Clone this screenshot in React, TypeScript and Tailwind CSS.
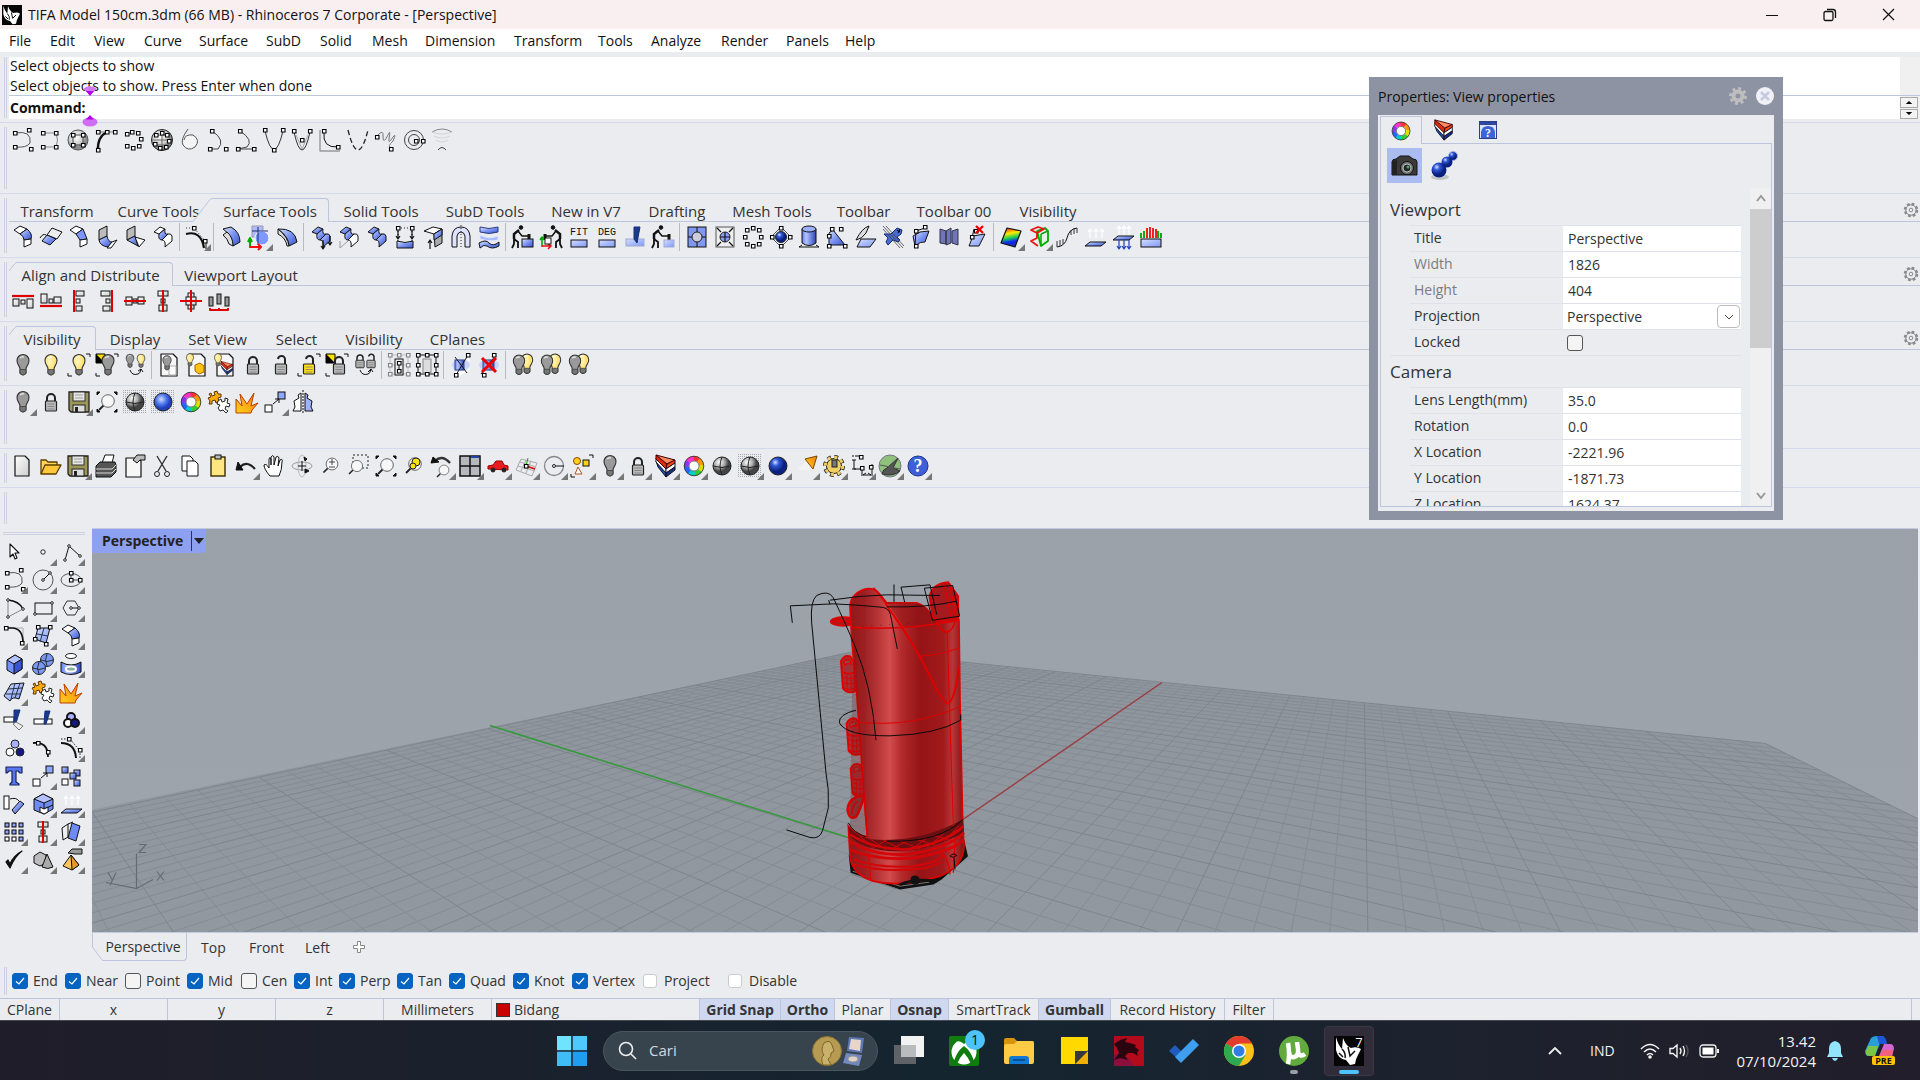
import React from "react";

type N = React.ReactNode;

/* ---------- drawing helpers: every icon is centred on 0,0 in a 28 x 28 cell ---------- */
const L = (d: string, stroke = "#111", fill = "none", w = 1) => (
  <path d={d} stroke={stroke} fill={fill} strokeWidth={w} strokeLinejoin="round" />
);
const Q = (...p: number[]) => {
  let d = "";
  for (let i = 0; i < p.length; i += 2) d += `M${p[i] - 1.5} ${p[i + 1] - 1.5}h3.5v3.5h-3.5z`;
  return <path d={d} fill="#fff" stroke="#000" strokeWidth="1.1" />;
};
const C = (x: number, y: number, r: number, fill = "none", stroke = "#222", w = 1) => (
  <circle cx={x} cy={y} r={r} fill={fill} stroke={stroke} strokeWidth={w} />
);
const R = (x: number, y: number, w: number, h: number, fill = "#fff", stroke = "#111", sw = 1) => (
  <rect x={x} y={y} width={w} height={h} fill={fill} stroke={stroke} strokeWidth={sw} />
);
const B = "url(#gB)";
const G = "url(#gG)";
const K = "#111";

const bulbPath = "M-3 4C-3 1-6 0-6-4.5A6 6 0 0 1 6-4.5C6 0 3 1 3 4V8Q0 12-3 8Z";
const Bulb = ({ f = "url(#gBulb)", x = 0, y = 0, s = 1 }: { f?: string; x?: number; y?: number; s?: number }) => (
  <g transform={`translate(${x} ${y}) scale(${s})`}>
    <path d={bulbPath} fill={f} stroke="#333" strokeWidth="1.1" />
    <path d="M-3 4.5H3V8.5Q0 11.5-3 8.5Z" fill="#777" stroke="#333" strokeWidth=".7" />
    <path d="M-3-7Q-1-9 1-8" stroke="#fff" strokeWidth="1.5" fill="none" opacity=".7" />
  </g>
);
const Lock = ({ f = "#bbb", open = false, x = 0, y = 0, s = 1 }: { f?: string; open?: boolean; x?: number; y?: number; s?: number }) => (
  <g transform={`translate(${x} ${y}) scale(${s})`}>
    <path d={open ? "M4 0V-5A3.5 3.5 0 0 0-3-6" : "M-4 0V-4A4 4 0 0 1 4-4V0"} fill="none" stroke="#222" strokeWidth="2" />
    <rect x="-5.5" y="-1" width="11" height="10" rx="1" fill={f} stroke="#222" strokeWidth="1.2" />
    <path d="M-3.5 2H3.5M-3.5 4.500H3.5M-3.500 7H3.5" stroke="#777" strokeWidth=".8" />
  </g>
);
const Brk = () => L("M7-11H11V-8M-11 8V11H-7");
const Ylw = () => (
  <>
    <path d="M-11-11H-2V-2H-11Z" fill="#ffe100" stroke="#000" />
    <path d="M-11-2V-11L-2-2Z" fill="#000" />
  </>
);
const Page = () => L("M-8-11H4L8-7V11H-8Z", K, "#f6f6f6", 1.2);
const Wheel = ({ s = 1 }: { s?: number }) => (
  <g transform={`scale(${s})`} fill="none" strokeWidth="4.5">
    {["#f33", "#f90", "#dd0", "#3c3", "#0cc", "#26f", "#83f", "#f3c"].map((c, i) => {
      const a = (i * Math.PI) / 4 - 1.7;
      const b = a + 0.83;
      return <path key={c} stroke={c} d={`M${7.5 * Math.cos(a)} ${7.5 * Math.sin(a)}A7.5 7.5 0 0 1 ${7.5 * Math.cos(b)} ${7.5 * Math.sin(b)}`} />;
    })}
    <circle r="9.8" stroke="#222" strokeWidth=".8" />
    <circle r="5" stroke="#444" strokeWidth=".7" fill="#fff" />
  </g>
);
const Mag = ({ x = 1, y = -2, s = 1, f = "#f7f7f7" }: { x?: number; y?: number; s?: number; f?: string }) => (
  <g transform={`translate(${x} ${y}) scale(${s})`}>
    <path d="M-5 5L-10 10" stroke="#222" strokeWidth="2" />
    <circle r="7" fill={f} stroke="#555" />
  </g>
);
const Floppy = () => (
  <>
    <path d="M-10-10H10V10H-8L-10 8Z" fill="#9c9657" stroke="#222" strokeWidth="1.3" />
    <rect x="-6" y="-10" width="12" height="9" fill="#e6e8e6" stroke="#333" />
    <path d="M-4-7H4M-4-4H4" stroke="#999" />
    <rect x="-6" y="3" width="12" height="7" fill="#ddd" stroke="#222" />
    <rect x="-4" y="5" width="3" height="5" fill="#222" />
  </>
);
const Globe = () => (
  <>
    {C(0, 0, 9, "url(#gGS)")}
    {L("M-9 0Q0 3 9 0M0-9Q-4 0 0 9", "#222")}
  </>
);
const Dots = () => <rect x="-12" y="-12" width="24" height="24" fill="url(#dots)" />;
const Layers = () => (
  <>
    {L("M-10-5L0 7V11L-8 1Z", "#112", "#1d4fb0")}
    {L("M-10-8L0 2V7L-10-4Z", "#112", "#fff")}
    {L("M-10-11L1-2 0 3-10-7Z", "#400", "#e02a12")}
    {L("M-10-11L9-6 1-2Z", "#400", "#ff8a5c")}
    {L("M1-2L9-6V-3L0 3Z", "#400", "#f2441c")}
    {L("M0 3L9-3V1L0 7Z", "#112", "#fff")}
    {L("M0 7L9 1V4L0 11Z", "#112", "#1b2f86")}
  </>
);
const Arr = (x: number, y: number, up = true, c = "#111") =>
  L(up ? `M${x} ${y + 9}V${y}M${x - 2} ${y + 3}L${x} ${y}L${x + 2} ${y + 3}` : `M${x} ${y - 9}V${y}M${x - 2} ${y - 3}L${x} ${y}L${x + 2} ${y - 3}`, c, "none", 1.2);
const Worker = ({ flip = false }: { flip?: boolean }) => (
  <g transform={flip ? "scale(-1 1)" : ""} fill="none" stroke="#111">
    <circle cx="-2" cy="-9.5" r="1.8" fill="#111" />
    <path d="M-4-7L-9-3V2" strokeWidth="2.5" />
    <path d="M-9 2L-5 5V11M-9 2V7L-11 11" strokeWidth="1.8" />
    <path d="M-5-6L-1-1 5-1" strokeWidth="1.500" />
    <path d="M6 3V-3" strokeWidth="3" />
  </g>
);
const Puzzle = () => (
  <>
    {L("M-10-8L-8-9-7-6-4-7-5-10-2-11-1-8 2-8 2-5-1-4 0-1-3 1-4-2-7-1-7 2-10 2-9-1-11-4-8-5Z", "#5a3500", "#ffab0f")}
    {L("M-1-1L2-3 3 0 6-1 6-4 9-3 8 1 11 2 10 5 7 4 6 7 9 9 7 11 4 8 1 9-1 6 1 3-2 2Z", "#222", "#fff")}
  </>
);
const Boom = () => L("M-11 11V-3L-5 4-7-8 0 2 7-9 4 4 11 1 5 8 4 11Z", "#c03c00", "url(#gO)");
const Move = () => (
  <>
    {R(-10, 3, 7, 7)}
    {R(3, -10, 7, 7, "#8ea6ff")}
    {L("M-2 2L4-3M0-3H4V1")}
  </>
);
/* stair-shaped surface: top tread, shaded riser, bottom tread */
const Step = ({ top = B, mid = B, low = B }: { top?: string; mid?: string; low?: string }) => (
  <>
    {L("M-9-5L-3-10 2-8-4-3Z", K, top)}
    {L("M-4-3L2-8Q1-2 5-3L-1 3Q-5 3-4-3Z", K, mid)}
    {L("M-1 3L5-3Q8-4 9-1V4L2 10Q3 3-1 3Z", K, low)}
  </>
);

const icons: Record<string, N> = {
  curve4: <>{L("M-7-7Q10-10 8 3M8 3Q5 8-7 7", "#555")}{Q(-7, -7, 7, -10, -7, 7, 9, 9)}</>,
  curve4b: <>{L("M-7-7H6Q9 0 6 7H-7", "#888")}{Q(-7, -7, 6, -7, -7, 7, 6, 7)}</>,
  curveSph: <>{C(0, 0, 10, "url(#gGL)", "#555")}{L("M-5-5H5V5H-5Z", "#444")}{Q(-5, -5, 5, -5, 5, 5, -5, 5)}</>,
  handle: <>{L("M-8 11Q-9-3 1-8", K, "none", 2.4)}{L("M-8-8H10", "#777")}{Q(-8, -8, 1, -8, 9, -8, -8, 10)}</>,
  ringPts: <>{Q(-7, -6, -2, -8, 4, -7, 7, -1, 5, 6, -1, 8, -7, 6)}</>,
  ballPts: <>{C(0, 0, 10.5, "url(#gGL)")}{L("M-10 0H10M0-10V10M-8-5H8M-8 5H8", "#666")}{Q(-6, -5, 0, -7, 5, -5, 7, 1, 4, 7, -2, 8, -7, 4)}</>,
  blob: <>{L("M-2-11Q-10 0-7 5Q-2 12 5 7Q11 0 3-5Q-5-6-6 0", "#555", "#f4f4f4")}</>,
  s1: <>{L("M-6-9Q8 0 0 9H-8", "#444")}{Q(-6, -9, -8, 9, 8, 9)}</>,
  s2: <>{L("M-6-9Q8 0 1 7L-8 9H8", "#444")}{Q(-6, -9, -8, 9, 8, 9)}</>,
  v1: <>{L("M-9-9Q0 28 9-9", "#333")}{Q(-9, -10, 9, -10, 0, 10)}</>,
  v2: <>{L("M-8-8Q-4 10 0 10 4 10 8-8", "#333")}{L("M-6-5L0 9M6-5L0 9", "#aaa")}{Q(-8, -9, 8, -9, 0, 0)}</>,
  lcurve: <>{L("M-10-10V11H10", "#999", "none", 1.4)}{L("M-6-8Q-8 8 8 7", K)}{Q(-6, -9, 8, 7)}</>,
  vdash: <path d="M-10-10Q0 30 10-10" fill="none" stroke="#222" strokeWidth="1.3" strokeDasharray="5 3" />,
  coil: <>{L("M-9-4Q-2-12-3-3Q-3 5 2-5Q5-12 3-1Q2 5 7-3Q11-8 7 1Q1 6 5 9", "#777")}{Q(-9, -3, 5, 9)}</>,
  spiral: <>{C(0, 0, 9.5, "none", "#444")}{C(0, 0, 5.5, "none", "#444")}{Q(2, 1, 9, 1)}</>,
  tornado: <>{L("M-10-8Q0-14 10-8", "#888")}{L("M-10-8Q0-4 10-8M-8-4Q0 0 8-4M-6 0Q0 4 6 0", "#d4d4d8")}{L("M-4 10Q0 5 4 10", "#444")}</>,

  sBlend: <>{L("M-9-7L-3-11 4-8-3-3Z", K, "#fff")}{L("M-3-3L4-8Q10-3 8 2L1 3Q1-1-3-3Z", K, B)}{L("M1 3L8 2V7L1 10Z", K, "#fff")}</>,
  sTilt: <>{L("M-4-2L1-9 11-5 6 2Z", K, "#eee")}{L("M-9 4L-4-2 5 2-1 8Z", K, B)}{L("M-11 1Q-8-4-5-2", K)}</>,
  sChamfer: <>{L("M-9-7L-3-11 4-8-3-3Z", K, "#fff")}{L("M-3-3L4-8 8 2 1 3Z", K, "#7d97ff")}{L("M1 3L8 2V7L1 10Z", K, "#fff")}</>,
  sFold: <>{L("M-8-7L0-11V-1L-8 3Z", K, "#bbb")}{L("M-8 3L0-1Q1 5 5 5L1 10Q-7 9-8 3Z", K, B)}{L("M5 5L10 3 4 11H0Z", K, "#fff")}</>,
  sFold2: <>{L("M-8-7L0-11V-1L-8 3Z", K, "#bbb")}{L("M-8 3L0-1 3 9Z", K, B)}{L("M0 0L10 3 4 10Z", K, "#fff")}</>,
  sStep: <Step top="#fff" low="#fff" />,
  fillet: <>{L("M9 5V12", K)}<path d="M-11-9H-3L9 5" stroke="#333" strokeDasharray="1 2" fill="none" />{L("M-11-3Q4-7 7 11", K, "none", 2.2)}{Q(-3, -9, 8, 4)}</>,
  arcS: <>{L("M-8-8L0-10Q9-5 9 5L2 9Q1-2-8-8Z", K, B)}{L("M-8-2L-4-5Q2 0 2 9L-2 7Q-3 2-8-2Z", K, "#ddd")}</>,
  grow: <>{L("M-7-11H4V0H-7Z", "#99a", "#aebcff")}{C(3, 1, 7, "#7f98ff", "#fff")}{L("M-7-6H9M-1-10V8", "#1c2c70")}{L("M-9 11V2M-11 5L-9 1L-7 5", "#0a0", "none", 2)}{L("M-9 10H2M-1 7L2 10L-1 13", "#e11", "none", 2)}</>,
  fan: <>{L("M-9-8Q8-9 10 5L2 9Q2 0-9-8Z", K, B)}{L("M-9-3Q-1 1 0 9L2 9Q1 0-9-8Z", K, "#ddd")}</>,
  stepDn: <><Step />{Arr(2, 12, false)}{Arr(9, 8, false)}</>,
  stepR: <><Step low="#fff" />{L("M-9 4V11L-1 4", "#999")}</>,
  step: <Step />,
  box4: <><path d="M-7-9H7M-7-9V6M7-9V6" stroke="#222" strokeDasharray="1 2" />{L("M-8 4Q0 7 8 4V11H-8Z", K, B)}{Q(-7, -9, 7, -9)}{Arr(-7, 2, false)}{Arr(7, 2, false)}</>,
  exBox: <>{L("M-9-6L0-10 9-8 1-3Z", K, "#fff")}{L("M1-3L9-8V6L2 10Z", K, "#aaa")}{L("M1-3L9-8V-2L1 3Z", K, B)}{Arr(-3, 3)}</>,
  arch: <>{L("M-9 10V-1Q-8-10 0-10 8-10 9-1V10H4V-1Q3-5 0-5-3-5-4-1V10Z", K, "#dce2ff")}<path d="M0-12V12" stroke="#222" strokeDasharray="1 2" /></>,
  waves: <>{L("M-9-10Q0-7 9-10V-5Q0-2-9-5Z", "#2b3b7c", B)}{L("M-9-2Q0 3 9-1V3Q2 5-9 2Z", "#dfe5ff", "#a9baff")}{L("M-10 6Q-3 2 0 6Q4 10 10 5V9Q3 13-2 9Q-5 7-9 11Z", K, B)}</>,
  w1: <><Worker />{R(-1, 2, 11, 8, B)}</>,
  w2: <><Worker flip />{L("M-9 10V0M-11 3L-9 0L-7 3", "#0a0", "none", 1.6)}{L("M-9 9H0M-3 7L0 9L-3 12", "#e11", "none", 1.6)}{R(-6, 1, 6, 6)}</>,
  fit: <><text x="0" y="-2" textAnchor="middle" className="font-['Liberation_Mono'] text-[10px]" fill="#111">FIT</text>{R(-8, 3, 16, 7, "url(#gBL)")}</>,
  deg: <><text x="0" y="-2" textAnchor="middle" className="font-['Liberation_Mono'] text-[10px]" fill="#111">DEG</text>{R(-8, 3, 16, 7, "url(#gBL)")}</>,
  knife: <>{R(-9, 2, 18, 7, "url(#gBL)", "#a0aad0")}{L("M-1-10H5L2 6-1 2Z", "#12307a", "#1c3a8c")}</>,
  w3: <><Worker />{R(1, 3, 10, 7, "url(#gBL)", "#a0aad0")}</>,
  grid1: <>{R(-9, -10, 18, 20, "#8198f0")}{L("M-9 0H9M0-10V10", K)}{C(0, 0, 5, "#ccd")}</>,
  grid2: <>{R(-9, -10, 18, 20, "#eee", "#555")}{C(0, 0, 5, "#8b9ff0")}{L("M-8-9L-4-5M8-9L4-5M-8 9L-4 5M8 9L4 5M-5 0H5M0-5V5", K, "none", 1.2)}</>,
  pts8: <>{Q(0, -9, 6, -7, 8, 0, 6, 7, 0, 9, -6, 7, -8, 0, -6, -7)}</>,
  diam: <>{L("M0-10L10 0 0 10-10 0Z", "#555")}{C(0, 0, 5.5, "url(#gBS)")}{Q(0, -9, 9, 0, 0, 9, -9, 0)}</>,
  cyl: <>{L("M-7-8V6Q0 11 7 6V-8", K, "url(#gBC)")}<ellipse cx="0" cy="-8" rx="7" ry="3" fill="#9db0ff" stroke="#111" />{L("M-10 10H10M-10 10L-7 8M10 10L7 8")}</>,
  tri: <>{L("M-8 8V-4L-4-7 8 8Z", K, B)}{Q(-8, -1, -5, -8, 4, -8, -8, 9, 8, 9)}</>,
  pen: <>{L("M-4 2H11L5 10H-8Z", K, "url(#gBL)")}{L("M-9 3Q-3-9 4-11L1-4Q-3 2-9 3Z", K, "#ddd")}</>,
  cat: <>{L("M-2-3L4-9 9-7 8-3 4 0 7 3 5 5 0 3-5 8-7 5-5 1-9-3Z", "#132d7b", "#4a6ad0")}{L("M-10-11L10 11M-10-8L7 11M-7-11L11 9", "#444", "none", 0.8)}{L("M4-7L7-5M7-8L5-4", "#000")}</>,
  surfPts: <>{L("M-8-1L-1-5 8-6 4 5Q0 4-6 9Z", K, B)}{L("M-6 8L-5-6 4-9", K)}{Q(-5, -6, 4, -10, -5, 9)}</>,
  book: <>{L("M-9-8L-3-6V7L-9 6ZM-3-6L2-9V6L-3 8ZM3-6L9-8V8L3 6Z", "#334", "#6f75b5")}</>,
  surfX: <>{L("M-8 9L-4-1 8-3 2 9Z", K, "url(#gBL)")}{L("M-5 1L-3-8", K)}{Q(-5, 0, -1, -6)}{L("M-1-11L6-4M6-11L-1-4", "#e00", "none", 2.2)}</>,
  rainbow: L("M-10 6L-4-9 10-6 4 10Z", K, "url(#gR)", 1.2),
  zebra: <>{L("M-2-6L6-9 9-6V4L2 9Z", "#0a0", "#e4f5e4", 1.8)}{L("M2-3L9-6M2-3V9", "#0a0", "none", 1.5)}{L("M-8-7L-1-10 5-8-2-4ZM-2-4V1L-8 4-1 9", "#e11", "none", 1.8)}</>,
  curv: <>{L("M-10 10Q-2 9 0 1 2-8 10-9", K)}{L("M-10 10V4M-7 9V3M-4 7V2M10-9V-4M7-9V-3M4-7V-2", "#333")}</>,
  arrowsUp: <>{L("M-10 9L-5 5H11L6 9Z", K, B)}{Arr(-5, -8, true, "#fff")}{Arr(1, -8, true, "#fff")}{Arr(7, -8, true, "#fff")}</>,
  arrowsUD: <>{L("M-10 3L-5-1H11L6 3Z", K, B)}{Arr(-4, -11, true, "#fff")}{Arr(1, -11, true, "#fff")}{Arr(6, -11, true, "#fff")}{Arr(-4, 12, false, "#2440c0")}{Arr(1, 12, false, "#2440c0")}{Arr(6, 12, false, "#2440c0")}</>,
  bars: <>{R(-10, 2, 20, 8, "url(#gBL)")}<path d="M-10 1V-4M-7 1V-6M7 1V-6M10 1V-4" stroke="#1a1" strokeWidth="2" /><path d="M-4 1V-9M-1 1V-10M2 1V-9M5 1V-8" stroke="#e22" strokeWidth="2" /></>,

  alTop: <>{L("M-11-5H11", "#d00", "none", 2.2)}{R(-10, -2, 6, 7, G)}{R(-2, -1, 4, 4, G)}{R(4, -2, 6, 9, G)}</>,
  alBot: <>{L("M-11 5H11", "#d00", "none", 2.2)}{R(-10, -7, 6, 9, G)}{R(-2, -2, 4, 4, G)}{R(3, -4, 7, 6, G)}</>,
  alL: <>{L("M-5-11V11", "#d00", "none", 2)}{R(-3, -10, 8, 5, G)}{R(-3, -2, 4, 4, G)}{R(-3, 5, 6, 5, G)}</>,
  alR: <>{L("M5-11V11", "#d00", "none", 2)}{R(-6, -10, 9, 5, G)}{R(-1, -2, 4, 4, G)}{R(-4, 5, 7, 5, G)}</>,
  alH: <>{R(-9, -4, 6, 8, G)}{R(-2, -2, 4, 4, G)}{R(3, -4, 6, 7, G)}{L("M-11 0H11", "#d00", "none", 2)}</>,
  alV: <>{R(-5, -10, 10, 5, G)}{R(-2, -2, 4, 4, G)}{R(-4, 4, 8, 6, G)}{L("M0-11V11", "#d00", "none", 2)}</>,
  alC: <>{R(-3, -8, 6, 16, G)}{R(-5, -4, 10, 8, G)}{L("M0-11V11M-11 0H11", "#d00", "none", 2)}</>,
  dist: <>{R(-10, -4, 4, 9, "#999")}{R(-2, -7, 4, 10, "#999")}{R(6, -4, 4, 9, "#999")}{L("M-9 7V9H9V7M0 7V9", "#d00", "none", 2)}</>,

  bulbG: <Bulb f="#9a9a9a" />,
  bulbY: <Bulb />,
  bulbSel: <><Bulb />{Brk()}</>,
  bulbInv: <>{Ylw()}<Bulb f="#9a9a9a" x={1} />{Brk()}</>,
  bulbSwap: <><Bulb f="#9a9a9a" x={-5} y={-4} s={0.65} /><Bulb x={6} y={-4} s={0.65} />{L("M-5 5Q-3 11 3 9M6 4Q5 9 3 9M3 6L6 4L8 7")}</>,
  pgBulb: <>{Page()}{R(0, 1, 7, 9, "#fff", "#aaa")}<Bulb f="#9a9a9a" x={-2} y={-2} s={0.7} /></>,
  pgBox: <>{Page()}<Bulb x={-7} y={-5} s={0.6} />{L("M-2 0L3-2 7 1V7L2 9-2 6Z", "#a60", "#ffc20e")}</>,
  pgLay: <>{Page()}<Bulb x={-7} y={-5} s={0.6} /><g transform="translate(2 3) scale(.6)"><Layers /></g></>,
  lock: <Lock />,
  lockO: <Lock open />,
  lockY: <><Lock f="#ffe21a" open />{Brk()}</>,
  lockInv: <>{Ylw()}<Lock x={2} />{Brk()}</>,
  lockSwap: <><Lock x={-5} y={-4} s={0.75} /><Lock open x={6} y={-4} s={0.75} />{L("M-5 5Q-3 11 3 9M6 4Q5 9 3 9M3 7L6 4L8 7")}</>,
  ptsG: (
    <>
      <g opacity=".45">{L("M-9-10H9V9H-9ZM-9 0H9M0-10V9", "#888")}{Q(-9, -10, 0, -10, 9, -10, 9, 0, 9, 9, -9, 9, -9, 0)}</g>
      {R(-4, -6, 8, 16, "#eee")}{L("M0-1V5")}{Q(0, -2, 0, 6)}
    </>
  ),
  ptsK: <>{L("M-9-10H9V9H-9Z")}{R(-4, -6, 8, 14, "#ddd", "#888")}{Q(-9, -10, 0, -10, 9, -10, 9, 0, 9, 9, -9, 9, -9, 0, 0, 9)}</>,
  clip: <>{L("M-5 7L8-10V5L-5 12Z", "#fff", "#fff")}<ellipse rx="9" ry="6" fill="#c8d4f8" />{R(-6, -5, 9, 10, "url(#gBC)", "#348")}{L("M-6-8L6 8M-5 10L7-10")}{Q(7, -10, -5, 10)}</>,
  clipX: <><ellipse rx="10" ry="6" fill="#c8d4f8" />{R(-6, -5, 11, 10, "url(#gBC)", "#348")}{L("M-8 9L7-10")}{Q(5, -10, -5, 10)}{L("M-7-7L7 7M7-7L-7 7", "#e00", "none", 3)}</>,
  bulbDbl: <><Bulb x={4} y={-1} s={0.95} /><Bulb f="#9a9a9a" x={-4} s={0.95} /></>,
  floppy: <Floppy />,
  zExt: <><Mag x={1} y={-1} s={0.9} />{L("M-10-7V-10H-7ZM7-10H10V-7ZM10 7V10H7ZM-7 10H-10V7Z", K, K)}</>,
  globeSel: <><Dots /><Globe /></>,
  blueSel: <><Dots />{C(0, 0, 9, "url(#gBS2)")}</>,
  wheel: <Wheel />,
  puzzle: <Puzzle />,
  boom: <Boom />,
  move: <Move />,
  mirror: <>{L("M-2-9L-5-7-4-4-9-1-8 5-10 9H-2Z", K, "#fff")}{L("M2-9L5-7 4-4 9-1 8 5 10 9H2Z", K, "#9fb2ff")}<path d="M0-12V12" stroke="#111" strokeDasharray="2 1" /></>,

  newDoc: L("M-7-10H3L7-6V10H-7Z", K, "url(#gG)", 1.2),
  open: <>{L("M-9 8V-6H-4L-2-4H7V-1", "#5c3f00", "#ffd25a", 1.3)}{L("M-9 8L-5-1H11L6 8Z", "#5c3f00", "#ffc83c", 1.3)}</>,
  print: <>{L("M-4-3L-1-11H8L6-3Z", K, "#fff")}{L("M-10 0L-6-4H9L10-1V6L5 11H-10Z", K, "#555")}{L("M-10 3H6L10-1M-10 7H6L10 3", "#ddd")}</>,
  docProp: <>{L("M-8-8H4L7-5V11H-8Z", K, "#f6f6f6", 1.2)}{L("M-1-6L3-11 11-11V-6H6L3-3Z", K, "#bbb")}</>,
  cut: <>{L("M-5-10L4 5M5-10L-4 5", "#333", "none", 1.4)}{C(-5, 8, 2.5)}{C(5, 8, 2.5)}</>,
  copy: <>{L("M-8-10H0L3-7V5H-8Z", K, "#fff")}{L("M-3-5H5L8-2V10H-3Z", K, "#fff")}</>,
  paste: <>{R(-7, -9, 14, 19, "#ffe680", "#3a2b00", 1.4)}{R(-3, -11, 6, 4, "#bbb")}</>,
  undo: <>{L("M-6 1Q1-6 9 3", "#222", "none", 2.2)}{L("M-10 4L-8-4-3 4Z", K, K)}</>,
  hand: L("M-4 10Q-10 3-10-1-8-3-5 2V-7Q-4-10-3-7V-1-9Q-1-12 0-9V-1L2-9Q4-11 5-8L4 0 6-6Q9-8 8-4 8 4 5 10Z", K, "#fff"),
  rotV: <><ellipse rx="10" ry="4" fill="none" stroke="#999" /><ellipse rx="4" ry="11" fill="none" stroke="#bbb" />{L("M0-5V5M-4 0H4")}{L("M3 3L7 5 3 7ZM2-9L5-7 3-5Z", K, K)}</>,
  zDyn: <><Mag x={2} y={-2} s={0.85} />{L("M-1-4H5M2-7V-1M-1 1H5", "#444")}</>,
  zWin: <><rect x="-5" y="-11" width="15" height="13" fill="none" stroke="#222" strokeDasharray="2 2" /><Mag x={-1} y={0} s={0.8} /></>,
  zSel: <><Mag s={0.9} />{C(2, -4, 4, "#ffe21a")}{C(-1, 0, 3, "#ffe21a")}</>,
  undoV: <><Mag x={2} y={4} s={0.7} />{L("M-7-5Q0-12 8-3", "#333", "none", 2.4)}{L("M-11-3L-9-9-3-4Z", K, K)}</>,
  four: <>{R(-10, -10, 20, 20, "#b5b8bc", K, 1.5)}{L("M-10 0H10M0-10V10", K, "none", 1.5)}{L("M1-9H9", "#24a", "none", 2)}</>,
  car: <>{L("M-10 3V0L-5-1-2-5H4L6-1 10 0V4Z", "#900", "#e81c1c")}{C(-5, 4, 2, "#222")}{C(6, 4, 2, "#222")}</>,
  cplane: <>{L("M-10 4L-5-7 11-3 6 10ZM-8 0L9 5M-6-4L10 1M-5 5L0-6M0 7L5-5", "#aaa")}{L("M0 0L2-8", "#0a0")}{L("M0 0L9 3", "#d00", "none", 1.5)}{Q(0, 0)}</>,
  circ: <>{C(0, 0, 9.5, "none", "#888", 1.3)}{C(0, 0, 1.5)}{L("M2 0H10", K)}</>,
  selObj: <>{C(-5, -5, 3.5, "#ffd21a", "#840")}{R(1, -6, 6, 6, "#ffd21a")}{L("M-4 1L0 8H-7Z", "#a52", "#fff")}{Brk()}</>,
  layers: <Layers />,
  globe: <Globe />,
  blue: C(0, 0, 9, "url(#gBS)"),
  spot: <>{L("M-8 3L8-11 3 4Z", "#f3f3f3", "#f3f3f3")}{L("M-1-7L11-10 7 3Z", "#7a4500", "url(#gO)")}</>,
  gear: (
    <>
      <circle r="7.5" fill="#f2cf63" stroke="#222" />
      <circle r="9" fill="none" stroke="#222" strokeWidth="4" strokeDasharray="3.8 3.27" />
      <circle r="8.7" fill="none" stroke="#f2cf63" strokeWidth="3" strokeDasharray="3.1 3.73" />
      {R(-2, -6, 5, 7, "#777", "#222")}
    </>
  ),
  dim: <>{L("M-7-10H0M-10-10H-8M-8-6V3M-10-6H-6M-10 3H-6M-8 3H0V10M10-2V10M1 9H9M1 9L4 7M9 9L6 7")}{Q(-1, -9, 0, 2, 9, 1)}</>,
  rhino: <>{C(0, 0, 11, "#8fc07c", "#778")}{L("M-8 8Q-7 3-3 2L8-8 3 2 10 5Q3 11-8 8Z", "#333", "#555")}{L("M-10-1L10 3", "#555")}</>,
  help: <>{C(0, 0, 10, "#3e5fd8", "#1d3390")}<text y="6" textAnchor="middle" fill="#fff" className="font-['Liberation_Serif'] text-[18px] font-bold">?</text></>,

  arrow: L("M-4-8V5L-1 2 1 7 3 6 1 1H5Z", K, "#fff", 1.1),
  point: C(0, 0, 2.2, "#fff"),
  poly: <>{L("M-6 8L-2-6 9 4")}{C(-6, 8, 1.3, "#fff")}{C(-2, -6, 1.3, "#fff")}{C(9, 4, 1.3, "#fff")}</>,
  circR: <>{C(0, 0, 10, "none", "#555")}{L("M0 0L7-7")}{C(0, 0, 1.3, "#fff")}{C(7, -7, 1.3, "#fff")}</>,
  ell: <><ellipse rx="10" ry="6.5" fill="none" stroke="#555" />{L("M0-6V0H9", "#444")}{Q(0, -7, 0, 0, 9, 0)}</>,
  arc: <>{L("M-6-8Q5-7 9 1", K, "none", 1.5)}{L("M-6-8V9L9 1", "#888")}{C(-6, -8, 1.3, "#fff")}{C(-6, 9, 1.3, "#fff")}{C(9, 1, 1.3, "#fff")}</>,
  rect: <>{R(-8, -5, 17, 11, "none")}{C(9, -5, 1.3, "#fff")}{C(-8, 6, 1.3, "#fff")}</>,
  hex: <>{L("M-4-7H4L8 0 4 7H-4L-8 0Z", "#333")}{L("M0 0H8")}{C(0, 0, 1.3, "#fff")}{C(8, 0, 1.3, "#fff")}</>,
  corner: <>{L("M-8-8H9V8", "#aaa")}{L("M-8-8H-1Q9-7 9 7", K, "none", 1.7)}{Q(-8, -8, 8, 7)}</>,
  surf4: <>{L("M-5-8H7L3 7-8 3Z", K, "url(#gBL)")}{L("M1-8L-3 6M-6-2L5 0", "#234")}{Q(-5, -9, 7, -9, -8, 3, 3, 8)}</>,
  box: <>{L("M-7-4L1-9 8-5V5L0 10-7 6Z", K, "#7490ff")}{L("M-7-4L1-9 8-5 0 0Z", K, "#b5c4ff")}{L("M0 0L8-5V5L0 10Z", K, "#3854d4")}</>,
  spheres: <>{C(4, -4, 6.5, "#7c96f5")}{L("M-2-4Q4-1 10-4M4-10Q1-4 4 2", "#233")}{C(-4, 4, 6.5, "#7c96f5")}{L("M-10 4Q-4 7 2 4M-4-2Q-7 4-4 10", "#233")}</>,
  pipeCut: <><ellipse cy="-8" rx="5.5" ry="2.5" fill="#fff" stroke="#222" />{L("M-10-2Q0 4 10-2V8Q0 13-10 8Z", K, "url(#gBC)")}<ellipse cx="0" cy="5" rx="5" ry="2.5" fill="#8aa" stroke="#fff" strokeWidth="2" /></>,
  mesh: <>{L("M-10 4L-3-8 10-9 5 7Q-2 4-4 9Z", K, "url(#gBL)")}{L("M-6-3L8-4M-8 2L6 2M1-9L-3 7M6-9L1 6", "#234")}</>,
  trim: <>{R(-10, -3, 10, 5)}{L("M0-10H6L2 3H0Z", "#12307a", "#1c3a8c")}{L("M2 2L9 6 5 10-1 4Z", "#777", "#eee")}</>,
  split: <>{R(-9, -1, 18, 5)}{L("M2-9H7L3 4H1Z", "#12307a", "#1c3a8c")}</>,
  group: <>{C(0, -3, 4, "#a9b0ff", K, 2)}{C(-3, 3, 4, "#fff", K, 2)}{C(4, 3, 4, "#13177e", K, 2)}</>,
  ungroup: <>{C(1, -4, 4, "#a9b0ff")}{C(-4, 4, 4, "#fff")}{C(6, 4, 4, "#13177e")}</>,
  edPts: <>{L("M-10-5Q5-7 5 9", K, "none", 1.8)}{Q(-5, -5, 5, 4)}</>,
  ctPts: <>{L("M-10-5Q4-5 5 10", K, "none", 2)}<path d="M-10-9H-1L9 3V10" fill="none" stroke="#222" strokeDasharray="1.5 1.5" />{Q(-2, -9, 9, 2)}</>,
  text: L("M-8-9H8V-3H6L4-5H2V6L5 8V9H-4V8L-2 6V-5H-5L-7-3H-8Z", "#16245c", "#5876f0", 1.2),
  arrCopy: <>{R(-9, -9, 6, 6, B)}{R(3, -6, 6, 6, B)}{R(-1, -3, 6, 6, B)}{R(-9, 3, 6, 6)}{R(3, 4, 6, 6, B)}</>,
  rot: <>{R(-10, -8, 5, 13)}{L("M-2 6L6-3 10 0 1 10Z", K, B)}{L("M-4-5Q2-7 5-3")}</>,
  cubeCorner: <>{L("M-9-5L0-10 10-5V5L1 10-9 6Z", K, "#6f8cf5")}{L("M-9-5L0-10 10-5 1-1Z", K, "#b3c2ff")}{L("M1-1V5M1 5L10 1", K)}{L("M-3 3L1 5 5 3V8L1 10-3 8Z", K, "#fff")}</>,
  grid9: <>{[-8, -1, 6].map((y) => [-8, -1, 6].map((x) => <rect key={`${x}${y}`} x={x - 1} y={y - 1} width="4" height="4" fill={y > 0 && x < 0 ? "#fff" : "#8da4ff"} stroke="#000" />))}</>,
  bend: <>{L("M-9-4L-3-8V5L-8 8Z", K, "#eee")}{L("M1-9L9-6 5 9-3 6Z", K, "#6d8af5")}{L("M-3-8L2-10")}</>,
  check: L("M-8 2L-4 8Q1-4 8-9-1-4-4 4L-6 0Z", K, K, 1.2),
  solids: <>{L("M-9-4L-3-8 3-5V3L-3 6-9 3Z", K, "#bbb")}{L("M4-6L10 7Q5 10-1 7Z", K, "#aaa")}</>,
  pyr: <>{L("M-8 6L0-5 8 5 1 10Z", K, "#ffc45a")}{L("M0-5L8 5 1 10Z", K, "#e39a2a")}{L("M-3-7L1-11H11V-6H4Z", K, "#999")}</>,
};

const Icon = ({ n }: { n: string }) => {
  const t = n.endsWith("+");
  const k = t ? n.slice(0, -1) : n;
  return (
    <button type="button" aria-label={k} className="block h-7 w-7 shrink-0">
      <svg viewBox="-14 -14 28 28" className="h-7 w-7 overflow-visible">
        {icons[k]}
        {t && <path d="M14 7V14H7Z" fill="#777" />}
      </svg>
    </button>
  );
};
const Icons = ({ list }: { list: string }) => (
  <div className="flex">
    {list.split(" ").map((n, i) =>
      n === "|" ? <span key={i} className="mx-[2px] h-7 w-[2px] border-l border-[#b8bac0]" /> : <Icon key={i} n={n} />
    )}
  </div>
);

const Grip = () => <div className="my-1 ml-1 w-[3px] shrink-0 border-x border-[#ccd2e4]" />;

const SmallGear = () => (
  <button type="button" aria-label="Tab options" className="mr-px h-4 w-4">
    <svg viewBox="-8 -8 16 16" className="h-4 w-4" fill="none" stroke="#888">
      <circle r="6" strokeWidth="2.5" strokeDasharray="2.7 2" />
      <circle r="5.2" />
      <circle r="1.8" />
    </svg>
  </button>
);

type Tab = { n: string; w: string };
const TabRow = ({ tabs, active, icons: list, slant }: { tabs: Tab[]; active: number; icons: string; slant: boolean }) => (
  <section className="flex h-16 border-b border-[#d5daea]">
    <Grip />
    <div className="ml-[2px] flex-1">
      <div className="mt-1 flex h-6 items-center border-b border-[#bcc5dc]">
        {tabs.map((t, i) => (
          <button
            key={i}
            type="button"
            className={`${t.w} relative z-10 h-6 shrink-0 pt-[2px] text-[15px] leading-5 whitespace-nowrap ${
              i === active ? "rounded-tr border-t border-r border-[#bcc5dc] bg-[#eaecf0]" : ""
            }`}
          >
            {i === active && slant && (
              <svg viewBox="0 0 20 24" className="absolute -top-px -left-[19px] h-6 w-5">
                <path d="M0 23.5L17 1.5Q18 .5 20 .5V24H0Z" fill="#eaecf0" />
                <path d="M0 23.5L17 1.5Q18 .5 20 .5" fill="none" stroke="#bcc5dc" />
              </svg>
            )}
            {i === active && !slant && (
              <svg viewBox="0 0 8 10" className="absolute -top-px left-0 h-[10px] w-2">
                <path d="M0 0H8L0 9Z" fill="#eaecf0" />
                <path d="M0 9L6 1.5Q7 .5 8 .5" fill="none" stroke="#bcc5dc" />
              </svg>
            )}
            {t.n}
          </button>
        ))}
        <span className="flex-1" />
        <SmallGear />
      </div>
      <div className="pt-[1px]">
        <Icons list={list} />
      </div>
    </div>
  </section>
);

/* ---------- perspective viewport ---------- */
const PU = 1.265;
const PV = 0.74;
const proj = (u: number, v: number) => {
  const w = 1 + PU * u + PV * v;
  return [(1723 * u - 60 * v + 909) / w, (689.4 * u + 412 * v + 857) / w];
};
const vMin = (u: number) => Math.max(-1, (-0.93 - PU * u) / PV);
const uMin = (v: number) => Math.max(-1, (-0.93 - PV * v) / PU);
const COUNT = 35;
const gridLines = () => {
  let minor = "";
  let major = "";
  for (let i = -COUNT; i <= COUNT; i++) {
    const k = i / COUNT;
    let s = "";
    const a = vMin(k);
    if (a < 1) {
      const p = proj(k, a);
      const q = proj(k, 1);
      s += `M${p[0].toFixed(1)} ${p[1].toFixed(1)}L${q[0].toFixed(1)} ${q[1].toFixed(1)}`;
    }
    const b = uMin(k);
    const p = proj(b, k);
    const q = proj(1, k);
    s += `M${p[0].toFixed(1)} ${p[1].toFixed(1)}L${q[0].toFixed(1)} ${q[1].toFixed(1)}`;
    if (i % 5 === 0) major += s;
    else minor += s;
  }
  return [minor, major];
};
const [minorD, majorD] = gridLines();

const Clasp = ({ x, y }: { x: number; y: number }) => (
  <g transform={`translate(${x} ${y})`} stroke="#e00000" strokeWidth="4">
    <path d="M0 10Q10-10 28-4L40 14 44 100Q20 110 6 92Z" fill="#a33034" strokeWidth="6" />
    <path d="M8 14Q14 2 26 6L30 18Q18 14 12 22Z" fill="#8a4a4c" />
    <path d="M3 42Q20 52 42 44" fill="none" strokeWidth="5" />
    <path d="M8 58Q24 66 42 60M8 74Q26 82 42 76M8 90Q26 98 42 92M18 52V98M30 52V98" fill="none" strokeWidth="3" />
  </g>
);

const Scene = () => (
  <svg viewBox="92 529 1826 404" preserveAspectRatio="xMidYMid slice" className="absolute inset-0 h-full w-full">
    <rect x="0" y="400" width="2200" height="700" fill="url(#sky)" />
    <path d="M-400 912L856 652 1765 744 3500 1600V2400H-400Z" fill="url(#ground)" />
    <path d={minorD} stroke="#868c94" strokeWidth="1" fill="none" />
    <path d={majorD} stroke="#7f858d" strokeWidth="1" fill="none" />
    <path d="M490 726L909 857" stroke="#349a3a" strokeWidth="1.5" />
    <path d="M1162 683L909 857" stroke="#9c3f44" strokeWidth="1.5" />
    <g stroke="#666b72" strokeWidth="1.2" fill="none">
      <path d="M136.5 854V889L106 883M136.5 889L153 880" />
      <path d="M139 845H146L139 853H146M108 873L112 880M116 873L110 886M157 872L164 881M164 872L157 881" />
    </g>
    <g transform="translate(740 560) scale(.33333)" fill="none">
      <path d="M326 885L332 940 480 990 580 975 605 960 684 890 672 840 640 900 340 905Z" fill="#101010" />
      <path d="M338 935L480 980 568 968M338 945L470 988" stroke="#777" strokeWidth="3" />
      <ellipse cx="310" cy="186" rx="38" ry="13" fill="#b01818" stroke="#e00000" strokeWidth="5" />
      <path d="M275 186H345M285 178L340 192" stroke="#e00000" strokeWidth="4" />
      <Clasp x={303} y={295} />
      <Clasp x={320} y={482} />
      <g transform="translate(332 618) scale(.95 .9)"><Clasp x={0} y={0} /></g>
      <path d="M372 708Q325 712 323 750 326 782 348 772 362 750 372 708Z" fill="#8a3a3c" stroke="#e00000" strokeWidth="8" />
      <path d="M352 725Q335 740 336 765" stroke="#e00000" strokeWidth="5" />
      <path d="M330 140Q332 105 370 90 402 80 420 105L440 130 530 130Q565 140 580 180L657 180 660 420 668 780 672 860Q670 920 600 950 480 985 400 965 335 945 330 890L325 800Q345 825 382 832L372 710 350 400 335 240Z" fill="url(#gRed)" stroke="#e00000" strokeWidth="5" />
      <path d="M440 130L530 130Q565 140 580 180L600 196Q540 204 494 204Z" fill="#8f1416" opacity=".55" />
      <path d="M345 240L358 480 382 832 330 812 336 400Z" fill="#7c1214" opacity=".25" />
      <path d="M325 800Q345 830 400 840 540 850 668 780L672 820Q560 880 450 875 350 865 328 825Z" fill="#6a1013" />
      <path d="M330 825Q400 870 500 870 620 850 670 800M328 845Q400 890 500 885 620 870 672 820M333 872Q420 905 520 895 640 875 672 840" stroke="#d40508" strokeWidth="8" />
      <path d="M340 900Q420 928 520 920 600 908 610 885M340 915Q440 942 560 925L605 908" stroke="#d40508" strokeWidth="6" />
      <path d="M360 830L400 865M390 838L440 872M430 842L490 872M480 845L540 868M530 840L590 858M580 828L635 842M400 865L440 842M450 872L500 845M510 872L560 836M560 864L610 824M610 850L655 800" stroke="#d40508" strokeWidth="3" />
      <path d="M372 710L382 830M385 880L392 960M600 880Q625 890 630 945M645 840L640 940" stroke="#e00000" strokeWidth="4" />
      <path d="M332 203Q480 215 655 183" stroke="#e00000" strokeWidth="5" />
      <path d="M340 202L655 184" stroke="#5b1012" strokeWidth="2" strokeDasharray="3 24" />
      <path d="M400 85Q425 110 445 145 520 245 580 370 610 430 625 432 645 420 657 320" stroke="#e00000" strokeWidth="6" />
      <path d="M540 290Q610 285 657 265M358 488Q520 505 662 440M622 220L628 430 640 800" stroke="#e00000" strokeWidth="3" />
      <path d="M590 185Q600 215 620 218 638 215 645 185" stroke="#e00000" strokeWidth="5" />
      <path d="M568 110Q580 70 625 68L655 110 655 180Q615 195 578 175Z" fill="#a31b1e" stroke="#e00000" strokeWidth="5" />
      <path d="M612 72L635 180M628 72L648 178M640 95L655 160" stroke="#e00000" strokeWidth="4" />
      <path d="M622 115H650M624 135H654M628 155H656M580 172Q615 190 655 174" stroke="#e00000" strokeWidth="3" />
      <g stroke="#0a0a0a" strokeWidth="3">
        <path d="M157 190L151 139 280 133Q380 138 430 144 447 148 451 165L472 268" />
        <path d="M139 811L210 834Q240 840 248 812L265 745Q268 690 258 640L215 190Q210 125 230 108 265 90 280 115 320 200 345 260 395 380 408 542" />
        <path d="M270 122Q360 108 440 106L600 108M266 122L270 135M462 75V128M440 142Q560 145 650 125" />
        <path d="M494 128L483 83 570 76 590 165M578 184L553 86 638 78 659 170 580 182" />
        <path d="M348 452Q295 465 298 490 320 530 450 529 590 525 662 482V465M325 790Q340 820 378 832M440 845Q600 850 668 780" />
        <path d="M630 890Q640 878 650 888 640 898 630 890M642 895L645 930" />
      </g>
      <circle cx="525" cy="962" r="14" fill="#111" />
      <path d="M480 975Q525 955 590 965" stroke="#111" strokeWidth="8" />
    </g>
  </svg>
);

/* ---------- properties panel ---------- */
const Row = ({ label, dim, children }: { label: string; dim?: boolean; children: (id: string) => N }) => {
  const id = label.replace(/\W/g, "");
  return (
    <div className="ml-5 flex h-[26px] border-t border-[#dfe2ea]">
      <label htmlFor={id} className={`w-[153px] pl-1 leading-6 ${dim ? "text-[#7c7c7c]" : ""}`}>
        {label}
      </label>
      <div className="flex flex-1 items-center">{children(id)}</div>
    </div>
  );
};
const Field = ({ id, v }: { id: string; v: string }) => (
  <input id={id} defaultValue={v} className="h-full w-full min-w-0 bg-white px-[5px] pb-px outline-none" />
);

const Panel = () => (
  <aside className="absolute top-[77px] right-[137px] z-30 h-[443px] w-[414px] bg-[#8e93a3] px-[9px] text-[14px]">
    <header className="flex h-[38px] items-center text-[#111]">
      <h2 className="flex-1">Properties: View properties</h2>
      <svg viewBox="-9 -9 18 18" className="mr-[9px] h-[18px] w-[18px]" fill="none" stroke="#bebebe">
        <circle r="4.5" strokeWidth="4" />
        <circle r="7.4" strokeWidth="3" strokeDasharray="2.9 2.9" />
      </svg>
      <button type="button" aria-label="Close panel" className="h-[18px] w-[18px]">
        <svg viewBox="-9 -9 18 18" className="h-[18px] w-[18px]">
          <circle r="9" fill="#f0f1f6" />
          <path d="M-4-4L4 4M4-4L-4 4" stroke="#c4cbe0" strokeWidth="2.5" />
        </svg>
      </button>
    </header>
    <div className="flex h-[396px] flex-col bg-[#eaecf0] px-[2px] pt-[1px] pb-1">
      <div className="flex h-[28px] items-center border-b border-[#bcc5dc]">
        <button type="button" aria-label="Properties" className="z-10 -mb-px flex h-[28px] w-[42px] items-center justify-center border border-b-0 border-[#bcc5dc] bg-[#eaecf0]">
          <svg viewBox="-12 -12 24 24" className="h-[22px] w-[22px]"><Wheel /></svg>
        </button>
        <button type="button" aria-label="Layers" className="flex w-11 justify-center">
          <svg viewBox="-12 -12 24 24" className="h-[22px] w-[22px]"><Layers /></svg>
        </button>
        <button type="button" aria-label="Help" className="flex w-11 justify-center">
          <svg viewBox="-10 -10 20 20" className="h-5 w-5">
            <rect x="-8.5" y="-8.5" width="17" height="17" fill="#dfe4f6" stroke="#2b3f8e" />
            <path d="M-8-8H8V-5H-8Z" fill="#2f479f" />
            <path d="M-7 8V2Q-6-4 0-4 6-4 7 2V8Z" fill="#3e63d8" />
            <text y="7" textAnchor="middle" fill="#fff" className="font-['Liberation_Serif'] text-[12px] font-bold">?</text>
          </svg>
        </button>
      </div>
      <div className="flex min-h-0 flex-1 flex-col border border-t-0 border-[#bcc5dc]">
        <div className="flex h-[44px] shrink-0 gap-1 pt-1 pl-[6px]">
          <button type="button" aria-label="Camera" className="h-[35px] w-[35px] bg-[#abbcf0]">
            <svg viewBox="0 0 35 35">
              <path d="M5 14Q5 11 9 11L13 8H22L26 11Q30 11 30 14V27H5Z" fill="#3a3a3a" stroke="#151515" />
              <path d="M5 13V27H10V12Z" fill="#222" />
              <circle cx="20" cy="20" r="6.5" fill="#777" stroke="#111" />
              <circle cx="20" cy="20" r="4" fill="#1c2a22" stroke="#bbb" />
              <circle cx="21" cy="19" r="1.5" fill="#5a9a6a" />
            </svg>
          </button>
          <button type="button" aria-label="Wallpaper" className="h-[35px] w-[35px]">
            <svg viewBox="0 0 35 35">
              <ellipse cx="14" cy="29" rx="9" ry="3" fill="#999" opacity=".5" />
              <circle cx="27" cy="8" r="4.5" fill="url(#gBS)" stroke="#a9b6e0" />
              <circle cx="21" cy="14" r="5.5" fill="url(#gBS)" />
              <circle cx="13" cy="22" r="7.5" fill="url(#gBS)" />
            </svg>
          </button>
        </div>
        <div className="flex min-h-0 flex-1">
          <div className="flex-1 overflow-hidden pr-[9px] pl-[9px] text-[#333]">
            <h3 className="h-[37px] pt-[10px] text-[17px] leading-6">Viewport</h3>
            <Row label="Title">{(id) => <Field id={id} v="Perspective" />}</Row>
            <Row label="Width" dim>{(id) => <Field id={id} v="1826" />}</Row>
            <Row label="Height" dim>{(id) => <Field id={id} v="404" />}</Row>
            <Row label="Projection">
              {(id) => (
                <div className="relative h-full w-full">
                  <select id={id} className="h-full w-full appearance-none bg-white px-1 pb-px">
                    <option>Perspective</option>
                  </select>
                  <span className="pointer-events-none absolute top-[1px] right-[1px] flex h-[23px] w-[23px] items-center justify-center rounded-sm border border-[#bbb] bg-white">
                    <svg viewBox="0 0 10 6" className="h-[6px] w-[10px]" fill="none" stroke="#444"><path d="M1 1L5 5L9 1" /></svg>
                  </span>
                </div>
              )}
            </Row>
            <Row label="Locked">
              {(id) => <input id={id} type="checkbox" className="ml-1 h-4 w-4 appearance-none rounded-[3px] border border-[#555] bg-[#f4f4f4]" />}
            </Row>
            <h3 className="h-8 border-t border-[#dfe2ea] pt-1 text-[17px] leading-6">Camera</h3>
            <Row label="Lens Length(mm)">{(id) => <Field id={id} v="35.0" />}</Row>
            <Row label="Rotation">{(id) => <Field id={id} v="0.0" />}</Row>
            <Row label="X Location">{(id) => <Field id={id} v="-2221.96" />}</Row>
            <Row label="Y Location">{(id) => <Field id={id} v="-1871.73" />}</Row>
            <Row label="Z Location">{(id) => <Field id={id} v="1624.37" />}</Row>
          </div>
          <div className="flex w-[21px] flex-col items-center bg-[#f0f0f0]">
            <svg viewBox="0 0 10 21" className="h-[21px] w-[10px]" fill="none" stroke="#999" strokeWidth="2"><path d="M1 13L5 8L9 13" /></svg>
            <div className="h-[139px] w-full bg-[#cdcdcd]" />
            <span className="flex-1" />
            <svg viewBox="0 0 10 21" className="h-[21px] w-[10px]" fill="none" stroke="#999" strokeWidth="2"><path d="M1 8L5 13L9 8" /></svg>
          </div>
        </div>
      </div>
    </div>
  </aside>
);

const rhinoHead = "M2 1Q4 9 8 13L9 2Q12 10 17 12 23 10 27 13L24 19Q22 22 21 28L16 29 12 24Q4 23 2 14Z";
const RhinoMark = () => (
  <>
    <rect width="30" height="30" fill="#050505" />
    <path d={rhinoHead} fill="#fff" />
    <path d="M8 13Q12 17 11 22M14 11L16 20 21 15M5 17L9 21" stroke="#111" strokeWidth="1.5" fill="none" />
  </>
);

const menu: Tab[] = [
  { n: "File", w: "w-[41px]" }, { n: "Edit", w: "w-11" }, { n: "View", w: "w-[50px]" }, { n: "Curve", w: "w-[55px]" },
  { n: "Surface", w: "w-[67px]" }, { n: "SubD", w: "w-[54px]" }, { n: "Solid", w: "w-[52px]" }, { n: "Mesh", w: "w-[53px]" },
  { n: "Dimension", w: "w-[89px]" }, { n: "Transform", w: "w-[84px]" }, { n: "Tools", w: "w-[53px]" }, { n: "Analyze", w: "w-[70px]" },
  { n: "Render", w: "w-[65px]" }, { n: "Panels", w: "w-[59px]" }, { n: "Help", w: "w-11" },
];
const surfTabs: Tab[] = [
  { n: "Transform", w: "w-24" }, { n: "Curve Tools", w: "w-[107px]" }, { n: "Surface Tools", w: "w-[117px]" }, { n: "Solid Tools", w: "w-[104px]" },
  { n: "SubD Tools", w: "w-[104px]" }, { n: "New in V7", w: "w-[98px]" }, { n: "Drafting", w: "w-[84px]" }, { n: "Mesh Tools", w: "w-[106px]" },
  { n: "Toolbar", w: "w-[77px]" }, { n: "Toolbar 00", w: "w-[104px]" }, { n: "Visibility", w: "w-[84px]" },
];
const visTabs: Tab[] = [
  { n: "Visibility", w: "w-[87px]" }, { n: "Display", w: "w-[78px]" }, { n: "Set View", w: "w-[87px]" }, { n: "Select", w: "w-[71px]" },
  { n: "Visibility", w: "w-[84px]" }, { n: "CPlanes", w: "w-[83px]" },
];
const osnaps: [string, boolean, string][] = [
  ["End", true, "w-[53px]"], ["Near", true, "w-[60px]"], ["Point", false, "w-[62px]"], ["Mid", true, "w-[54px]"], ["Cen", false, "w-[53px]"],
  ["Int", true, "w-[45px]"], ["Perp", true, "w-[58px]"], ["Tan", true, "w-[52px]"], ["Quad", true, "w-16"], ["Knot", true, "w-[59px]"],
  ["Vertex", true, "w-[71px]"], ["Project", false, "w-[85px]"], ["Disable", false, "w-20"],
];
const panes: [string, string, boolean][] = [
  ["Grid Snap", "w-[81px]", true], ["Ortho", "w-[54px]", true], ["Planar", "w-14", false], ["Osnap", "w-[58px]", true],
  ["SmartTrack", "w-[90px]", false], ["Gumball", "w-[72px]", true], ["Record History", "w-[114px]", false], ["Filter", "w-[49px]", false],
];

const Defs = () => (
  <svg className="absolute h-0 w-0" aria-hidden="true">
    <defs>
      <linearGradient id="gB" x1="0" y1="0" x2="1" y2="1"><stop offset="0" stopColor="#dbe3ff" /><stop offset=".5" stopColor="#7a93f2" /><stop offset="1" stopColor="#3a55c8" /></linearGradient>
      <linearGradient id="gBL" x1="0" y1="0" x2="1" y2="1"><stop offset="0" stopColor="#d5deff" /><stop offset="1" stopColor="#7f98f8" /></linearGradient>
      <linearGradient id="gBC" x1="0" y1="0" x2="1" y2="0"><stop offset="0" stopColor="#5f7ef0" /><stop offset=".3" stopColor="#b4c3ff" /><stop offset="1" stopColor="#2a45b8" /></linearGradient>
      <linearGradient id="gG" x1="0" y1="0" x2="1" y2="1"><stop offset="0" stopColor="#fff" /><stop offset="1" stopColor="#ccc" /></linearGradient>
      <linearGradient id="gO" x1="0" y1="1" x2="1" y2="0"><stop offset="0" stopColor="#ffd21a" /><stop offset="1" stopColor="#f57c10" /></linearGradient>
      <linearGradient id="gR" x1="0" y1="0" x2=".2" y2="1"><stop offset="0" stopColor="#e00" /><stop offset=".35" stopColor="#fe0" /><stop offset=".6" stopColor="#1c5" /><stop offset=".8" stopColor="#12f" /><stop offset="1" stopColor="#13a" /></linearGradient>
      <radialGradient id="gBulb" cx=".4" cy=".35"><stop offset="0" stopColor="#fff6c0" /><stop offset="1" stopColor="#ffdf6a" /></radialGradient>
      <radialGradient id="gGS" cx=".35" cy=".3"><stop offset="0" stopColor="#fff" /><stop offset=".6" stopColor="#aaa" /><stop offset="1" stopColor="#444" /></radialGradient>
      <radialGradient id="gGL" cx=".4" cy=".35"><stop offset="0" stopColor="#fff" /><stop offset=".7" stopColor="#d0d0d0" /><stop offset="1" stopColor="#8a8a8a" /></radialGradient>
      <radialGradient id="gBS" cx=".35" cy=".3"><stop offset="0" stopColor="#d5e0ff" /><stop offset=".4" stopColor="#2f58d8" /><stop offset="1" stopColor="#0a2080" /></radialGradient>
      <radialGradient id="gBS2" cx=".4" cy=".35"><stop offset="0" stopColor="#cfdcff" /><stop offset=".6" stopColor="#4a74ee" /><stop offset="1" stopColor="#1f40b8" /></radialGradient>
      <pattern id="dots" width="2" height="2" patternUnits="userSpaceOnUse"><rect width="1" height="1" fill="#a5a8b2" /></pattern>
      <linearGradient id="sky" x1="0" y1="0" x2="0" y2="1"><stop offset="0" stopColor="#99a0a7" /><stop offset="1" stopColor="#a0a7ae" /></linearGradient>
      <linearGradient id="ground" x1="0" y1="0" x2="0" y2="1"><stop offset="0" stopColor="#8e959d" /><stop offset=".3" stopColor="#949ba3" /></linearGradient>
      <linearGradient id="gRed" x1="0" y1="0" x2="1" y2="0"><stop offset="0" stopColor="#8f1719" /><stop offset=".14" stopColor="#9c2022" /><stop offset=".26" stopColor="#b83638" /><stop offset=".36" stopColor="#d24c4d" /><stop offset=".46" stopColor="#b22a2c" /><stop offset=".62" stopColor="#961416" /><stop offset=".82" stopColor="#a01a1c" /><stop offset=".9" stopColor="#b83638" /><stop offset="1" stopColor="#7e1214" /></linearGradient>
    </defs>
  </svg>
);

const TaskApp = ({ label, children, on }: { label: string; children: N; on?: boolean }) => (
  <button type="button" aria-label={label} className={`relative flex h-[50px] w-[50px] items-center justify-center rounded ${on ? "border border-[#3b3744] bg-[#302c39]" : ""}`}>
    <svg viewBox="0 0 30 30" className="h-[30px] w-[30px] overflow-visible">{children}</svg>
  </button>
);

export default function App() {
  return (
    <div className="relative flex min-h-screen flex-col overflow-hidden bg-[#eaecf0] font-['Open_Sans','Noto_Sans',sans-serif] text-[14px] text-[#333]">
      <Defs />
      <header className="flex h-[29px] items-center bg-[#f9eff1] pl-[2px] text-[#111]">
        <svg viewBox="0 0 30 30" className="h-5 w-5"><RhinoMark /></svg>
        <h1 className="ml-[6px] flex-1">TIFA Model 150cm.3dm (66 MB) - Rhinoceros 7 Corporate - [Perspective]</h1>
        <button type="button" aria-label="Minimize" className="flex w-[58px] justify-center"><svg viewBox="0 0 12 12" className="h-3 w-3" stroke="#111"><path d="M0 6.500H12" /></svg></button>
        <button type="button" aria-label="Restore" className="flex w-[58px] justify-center"><svg viewBox="0 0 14 14" className="h-[14px] w-[14px]" fill="none" stroke="#111" strokeWidth="1.3"><rect x="1" y="3.5" width="9" height="9" rx="1.5" /><path d="M4 1.500H10Q12.500 1.500 12.500 4V10" /></svg></button>
        <button type="button" aria-label="Close" className="mr-[3px] flex w-[58px] justify-center"><svg viewBox="0 0 13 13" className="h-[13px] w-[13px]" stroke="#111" strokeWidth="1.2"><path d="M1 1L12 12M12 1L1 12" /></svg></button>
      </header>
      <nav className="flex h-[23px] items-center bg-white pt-px pl-[9px] text-[#111]">
        {menu.map((m) => (
          <button key={m.n} type="button" className={`${m.w} text-left leading-5`}>{m.n}</button>
        ))}
      </nav>

      <section className="relative flex h-[71px] border-b border-[#d5daea] pt-[5px]">
        <div className="mb-1 ml-1 w-[3px] border-x border-[#ccd2e4]" />
        <div className="ml-[2px] flex-1 text-[#111]">
          <div className="flex h-[38px]">
            <div className="flex-1 bg-white pl-[1px] leading-[18px]">
              <p className="h-5">Select objects to show</p>
              <p className="h-[18px]">Select objects to show. Press Enter when done</p>
            </div>
            <div className="w-5 bg-[#f0f0f0]" />
          </div>
          <div className="flex h-6 border-t border-[#bcc9da]">
            <label className="flex flex-1 items-center bg-white pb-px pl-[1px] font-bold">
              Command:<input className="ml-1 flex-1 outline-none" />
            </label>
            <div className="flex w-5 flex-col gap-px bg-[#f0f0f0] pt-px pr-[2px]">
              {["M5 1L9 5H1Z", "M1 1H9L5 5Z"].map((d) => (
                <button key={d} type="button" aria-label="History" className="flex h-[11px] items-center justify-center border border-[#aaa] bg-[#f3f3f3]">
                  <svg viewBox="0 0 10 6" className="h-[5px] w-2"><path d={d} /></svg>
                </button>
              ))}
            </div>
          </div>
        </div>
        <svg viewBox="0 0 16 42" className="absolute top-[33px] left-[82px] h-[42px] w-4">
          <path d="M1 4Q8-2 15 4L8 10Z" fill="#d07af5" /><path d="M4 6H12L8 11Z" fill="#b400f0" />
          <ellipse cx="8" cy="37" rx="7.5" ry="4.5" fill="#cf6df7" /><path d="M8 30L12 34.500H4Z" fill="#b400f0" />
        </svg>
      </section>

      <section className="flex h-[71px] border-b border-[#d5daea]">
        <Grip />
        <div className="ml-px pt-[3px]"><Icons list="curve4 curve4b curveSph handle ringPts ballPts blob s1 s2 v1 v2 lcurve vdash coil spiral tornado" /></div>
      </section>
      <TabRow tabs={surfTabs} active={2} slant icons="sBlend sTilt sChamfer sFold sFold2 sStep | fillet+ | arcS grow+ fan | stepDn stepR step box4 exBox arch waves | w1 w2 fit deg knife w3 | grid1 grid2 pts8 diam cyl tri pen cat surfPts book surfX | rainbow+ zebra+ curv arrowsUp arrowsUD bars" />
      <TabRow tabs={[{ n: "Align and Distribute", w: "w-[164px]" }, { n: "Viewport Layout", w: "w-[136px]" }]} active={0} slant={false} icons="alTop alBot alL alR alH alV alC dist" />
      <TabRow tabs={visTabs} active={0} slant={false} icons="bulbG bulbY bulbSel bulbInv bulbSwap | pgBulb pgBox pgLay lock lockO lockY lockInv lockSwap | ptsG ptsK | clip clipX | bulbDbl bulbDbl bulbDbl" />
      <section className="flex h-[63px] border-b border-[#d5daea]">
        <Grip />
        <div className="ml-[2px] pt-[2px]"><Icons list="bulbG+ lock floppy+ zExt globeSel blueSel wheel puzzle boom move+ mirror" /></div>
      </section>
      <section className="flex h-[39px] border-b border-[#d5daea]">
        <Grip />
        <div className="ml-px pt-[3px]"><Icons list="newDoc open floppy+ print docProp cut copy paste undo+ hand rotV zDyn zWin zExt zSel undoV+ four+ car+ cplane+ circ+ selObj+ bulbG+ lock+ layers+ wheel+ globe globeSel+ blue+ spot+ gear+ dim+ rhino+ help+" /></div>
      </section>
      <section className="flex h-10"><Grip /></section>

      <div className="flex flex-1">
        <aside className="w-[92px] pt-1">
          <div className="mr-[7px] ml-[3px] h-[3px] border-y border-[#ccd2e4]" />
          <div className="mt-[3px] grid w-[86px] grid-cols-3">
            {"arrow point+ poly+ curve4+ circR+ ell+ arc+ rect+ hex+ corner+ surf4+ sBlend+ box+ spheres+ pipeCut+ mesh+ puzzle boom trim split group+ ungroup edPts ctPts+ text move+ arrCopy rot cubeCorner+ arrowsUp+ grid9+ alV+ bend+ check+ solids+ pyr+".split(" ").map((n, i) => <Icon key={i} n={n} />)}
          </div>
        </aside>
        <main className="flex flex-1 flex-col pr-[2px]">
          <div className="relative min-h-[404px] flex-1 overflow-hidden border-y border-[#c4cbe0]">
            <Scene />
            <div className="relative flex h-6 w-[114px] items-center rounded-br bg-[#8da1f0] pb-px pl-[10px] font-bold text-[#222]">
              <span>Perspective</span>
              <span className="ml-auto h-5 w-px bg-[#333]" />
              <button type="button" aria-label="Viewport menu" className="w-[14px]"><svg viewBox="0 0 10 6" className="ml-[2px] h-[6px] w-[10px]"><path d="M0 0H10L5 6Z" fill="#222" /></svg></button>
            </div>
          </div>
          <div className="flex h-7">
            <button type="button" className="relative w-[95px] rounded-br border-r border-b border-[#bcc5dc] pl-2">
              Perspective
              <svg viewBox="0 0 12 28" className="absolute top-0 left-0 h-7 w-3"><path d="M0 14L11 28H0Z" fill="#eaecf0" /><path d="M.5 0V14L10.500 27.500H12" fill="none" stroke="#bcc5dc" /></svg>
            </button>
            <button type="button" className="ml-[14px] w-12 text-left">Top</button>
            <button type="button" className="w-14 text-left">Front</button>
            <button type="button" className="w-12 text-left">Left</button>
            <button type="button" aria-label="New viewport"><svg viewBox="0 0 12 12" className="h-3 w-3"><path d="M4.500.5H7.500V4.500H11.500V7.500H7.500V11.500H4.500V7.500H.5V4.500H4.500Z" fill="#fff" stroke="#888" /></svg></button>
          </div>
        </main>
      </div>

      <section className="flex h-[37px] items-center pt-[2px]">
        <div className="ml-1 h-7 w-[3px] border-x border-[#ccd2e4]" />
        <div className="ml-[5px] flex">
          {osnaps.map(([n, on, w], i) => (
            <label key={n} className={`${w} flex items-center gap-[5px] whitespace-nowrap`}>
              <span className="relative flex h-4 w-4 shrink-0 items-center">
                <input
                  type="checkbox"
                  defaultChecked={on}
                  className={`appearance-none rounded-[3px] border ${on ? "h-4 w-4 border-[#0563c1] bg-[#0563c1]" : i > 10 ? "h-[14px] w-[14px] border-[#ccc] bg-white" : "h-4 w-4 border-[#555] bg-[#f4f4f4]"}`}
                />
                {on && <svg viewBox="0 0 16 16" className="pointer-events-none absolute inset-0" fill="none" stroke="#fff" strokeWidth="1.2"><path d="M4 8.500L7 11L12 5" /></svg>}
              </span>
              {n}
            </label>
          ))}
        </div>
      </section>
      <footer className="flex h-[22px] border-t border-[#bcc5dc] text-center leading-[22px]">
        {[["CPlane", "w-[60px]"], ["x", "w-[108px]"], ["y", "w-[108px]"], ["z", "w-[108px]"], ["Millimeters", "w-[108px]"]].map(([n, w]) => (
          <span key={n} className={`${w} border-r border-[#bcc5dc]`}>{n}</span>
        ))}
        <span className="flex w-[208px] items-center border-r border-[#bcc5dc] pl-1">
          <span className="mr-1 h-[14px] w-[14px] border border-[#333] bg-[#c80000]" />Bidang
        </span>
        {panes.map(([n, w, on]) => (
          <button key={n} type="button" className={`${w} border-r border-[#bcc5dc] whitespace-nowrap ${on ? "bg-[#cfd8ef] font-bold" : ""}`}>{n}</button>
        ))}
        <span className="mr-2 flex-1 border-r border-[#bcc5dc]" />
      </footer>

      <div className="flex h-[60px] items-center border-t border-[#454a50] bg-linear-to-r from-[#1f1d29] via-[#142530] to-[#221e2b] text-[#f2f2f2]">
        <div className="flex flex-1 items-center pl-[547px]">
          <button type="button" aria-label="Start" className="flex h-[50px] w-[50px] items-center justify-center">
            <svg viewBox="0 0 30 30" className="h-[30px] w-[30px]">
              <path d="M0 0H14.200V14.200H0Z" fill="#6fe3ff" /><path d="M15.700 0H30V14.200H15.700Z" fill="#4fc8fb" /><path d="M0 15.700H14.200V30H0Z" fill="#3fbdf7" /><path d="M15.700 15.700H30V30H15.700Z" fill="#1f9df0" />
            </svg>
          </button>
          <label className="ml-[6px] flex h-10 w-[275px] items-center rounded-full border border-[#4a565e] bg-[#37444d] pl-[14px]">
            <svg viewBox="0 0 19 19" className="h-[19px] w-[19px]" fill="none" stroke="#eee" strokeWidth="1.6"><circle cx="8" cy="8" r="6.5" /><path d="M13 13L18 18" /></svg>
            <input placeholder="Cari" aria-label="Cari" className="ml-3 w-[163px] text-[15px] outline-none placeholder:text-[#d4d8da]" />
            <svg viewBox="0 0 54 32" className="h-8 w-[54px]">
              <circle cx="15" cy="16" r="14.5" fill="#b79b52" stroke="#8d7430" />
              <path d="M11 30Q8 22 12 20 8 15 12 8 18 4 20 10L22 16 19 18Q20 22 16 24L19 30Z" fill="#c9b16c" stroke="#7d6528" />
              <path d="M37 2L52 3 50 18 35 16Z" fill="#5f78b5" /><path d="M39 4L49 5 48 16 37 14Z" fill="#e6d5c8" />
              <path d="M34 18L50 20 47 31 31 28Z" fill="#7388c0" /><ellipse cx="41" cy="24" rx="5" ry="3" fill="#ddd2cd" stroke="#998" />
            </svg>
          </label>
          <div className="ml-[6px] flex gap-[5px]">
            <TaskApp label="Task view"><path d="M0 9H22V28H0Z" fill="#5f6266" /><path d="M7 0H30V21H7Z" fill="#f2f2f2" /><path d="M7 9H22V21H7Z" fill="#b9bbbd" /></TaskApp>
            <TaskApp label="Xbox">
              <rect width="30" height="30" rx="2" fill="#107c10" /><circle cx="15" cy="16" r="12.5" fill="#fff" />
              <path d="M5 25Q8 15 15 10 22 15 25 25L22 28Q19 21 15 17 11 21 8 28Z" fill="#107c10" /><path d="M7 5Q12 5 15 8 18 5 23 5 15 0 7 5Z" fill="#107c10" />
              <circle cx="26" cy="4" r="10" fill="#4cc2ff" /><text x="26" y="9" textAnchor="middle" fill="#111" className="text-[14px]">1</text>
            </TaskApp>
            <TaskApp label="Explorer">
              <path d="M0 4Q0 2 2 2H10L13 5H28Q30 5 30 7V12H0Z" fill="#d9930d" /><path d="M0 10Q0 8 2 8H10L13 5H28Q30 5 30 7V26Q30 28 28 28H2Q0 28 0 26Z" fill="#ffcb45" />
              <path d="M5 28V23Q5 20 8 20H22Q25 20 25 23V28Z" fill="#1178d4" /><path d="M9 24H21" stroke="#0a4f94" strokeWidth="2" />
            </TaskApp>
            <TaskApp label="Sticky notes"><path d="M2 1H29V14L16 28H2Z" fill="#ffd900" /><path d="M29 14V28H16Z" fill="#f0ae00" /><path d="M16 15H29L16 28Z" fill="#37373c" /></TaskApp>
            <TaskApp label="Dragon">
              <rect width="30" height="30" fill="#b30b1c" />
              <path d="M0 18Q10 18 16 24L20 30H0Z" fill="#8a0f3c" />
              <path d="M0 8L6 4 13 2 11 6 16 7 22 9 21 11 25 14 23 17 24 20 19 17 14 17 11 20 14 24 6 22 0 24 5 17 3 12Z" fill="#2a0510" />
            </TaskApp>
            <TaskApp label="To do"><path d="M0 15L6 9 13 16 10 24Z" fill="#1f5cbd" /><path d="M24 3L30 9 12 27 6 21Z" fill="#3e9ff0" /></TaskApp>
            <TaskApp label="Chrome">
              <circle cx="15" cy="15" r="15" fill="#fbc116" />
              <path d="M15 15L2 7.500A15 15 0 0 0 15 30L21.500 19Z" fill="#2da94f" /><path d="M15 15L2 7.500A15 15 0 0 1 28 7.500H15Z" fill="#e33b2e" />
              <circle cx="15" cy="15" r="7" fill="#fff" /><circle cx="15" cy="15" r="5.5" fill="#2f7de9" />
            </TaskApp>
            <TaskApp label="Torrent">
              <circle cx="15" cy="15" r="15" fill="#62aa3d" /><path d="M9 28Q11 18 9 7M10 16Q11 22 15 21 20 20 19 13L18 6M19 16Q21 22 26 18" fill="none" stroke="#fff" strokeWidth="4.5" />
              <rect x="11" y="34" width="8" height="4" rx="2" fill="#9a9ea2" />
            </TaskApp>
            <TaskApp label="Rhinoceros 7" on>
              <RhinoMark />
              <text x="25" y="11" textAnchor="middle" fill="#fff" className="text-[13px]">7</text>
              <rect x="5" y="34" width="20" height="4" rx="2" fill="#4cc2ff" />
            </TaskApp>
          </div>
        </div>
        <button type="button" aria-label="Hidden icons" className="mr-[26px] w-5"><svg viewBox="0 0 14 8" className="ml-1 h-2 w-[14px]" fill="none" stroke="#eee" strokeWidth="1.8"><path d="M1 7L7 1L13 7" /></svg></button>
        <span className="w-[50px]">IND</span>
        <svg viewBox="0 0 20 18" className="h-[18px] w-5" fill="none" stroke="#f2f2f2" strokeWidth="1.6"><path d="M1 7Q10-2 19 7M4 10Q10 4 16 10M7 13Q10 10 13 13" /><circle cx="10" cy="15" r="1" fill="#fff" /></svg>
        <svg viewBox="0 0 20 18" className="ml-[9px] h-[18px] w-5" fill="none" stroke="#f2f2f2" strokeWidth="1.4"><path d="M1 6.500H4L8 3V15L4 11.500H1ZM11 6Q13 9 11 12M14 4Q17 9 14 14" /><path d="M17 3Q21 9 17 15" stroke="#555" /></svg>
        <svg viewBox="0 0 20 14" className="ml-[10px] h-[14px] w-5" fill="none" stroke="#f2f2f2" strokeWidth="1.3"><rect x="1" y="1" width="16" height="12" rx="3" /><rect x="3.5" y="3.5" width="11" height="7" fill="#fff" stroke="none" /><path d="M19 5V9" strokeWidth="2" /></svg>
        <div className="ml-[9px] w-[88px] text-right text-[15px] leading-5"><p>13.42</p><p>07/10/2024</p></div>
        <svg viewBox="0 0 16 20" className="ml-[11px] h-5 w-4" fill="#93e4fd"><path d="M8 0Q14 1 14 8V12L16 16H0L2 12V8Q2 1 8 0ZM5 17H11Q10 20 8 20 6 20 5 17Z" /></svg>
        <svg viewBox="0 0 30 30" className="mr-[25px] ml-[22px] h-[30px] w-[30px]">
          <path d="M6 2Q8 0 12 0H18L10 20H4Q0 20 0 15Z" fill="#2a9fd6" /><path d="M3 10H13L10 20H4Q0 20 1 15Z" fill="#7cc644" /><path d="M12 0H18Q21 1 22 8H14Z" fill="#1d57d8" />
          <path d="M19 8H25Q29 8 29 13L27 20H14Z" fill="#d765d0" /><path d="M17 14H28L27 22H14Z" fill="#f0637c" />
          <rect x="7" y="20" width="23" height="9" rx="2" fill="#ffc400" /><text x="18.5" y="28" textAnchor="middle" fill="#111" className="text-[9px] font-bold">PRE</text>
        </svg>
      </div>
      <Panel />
    </div>
  );
}
